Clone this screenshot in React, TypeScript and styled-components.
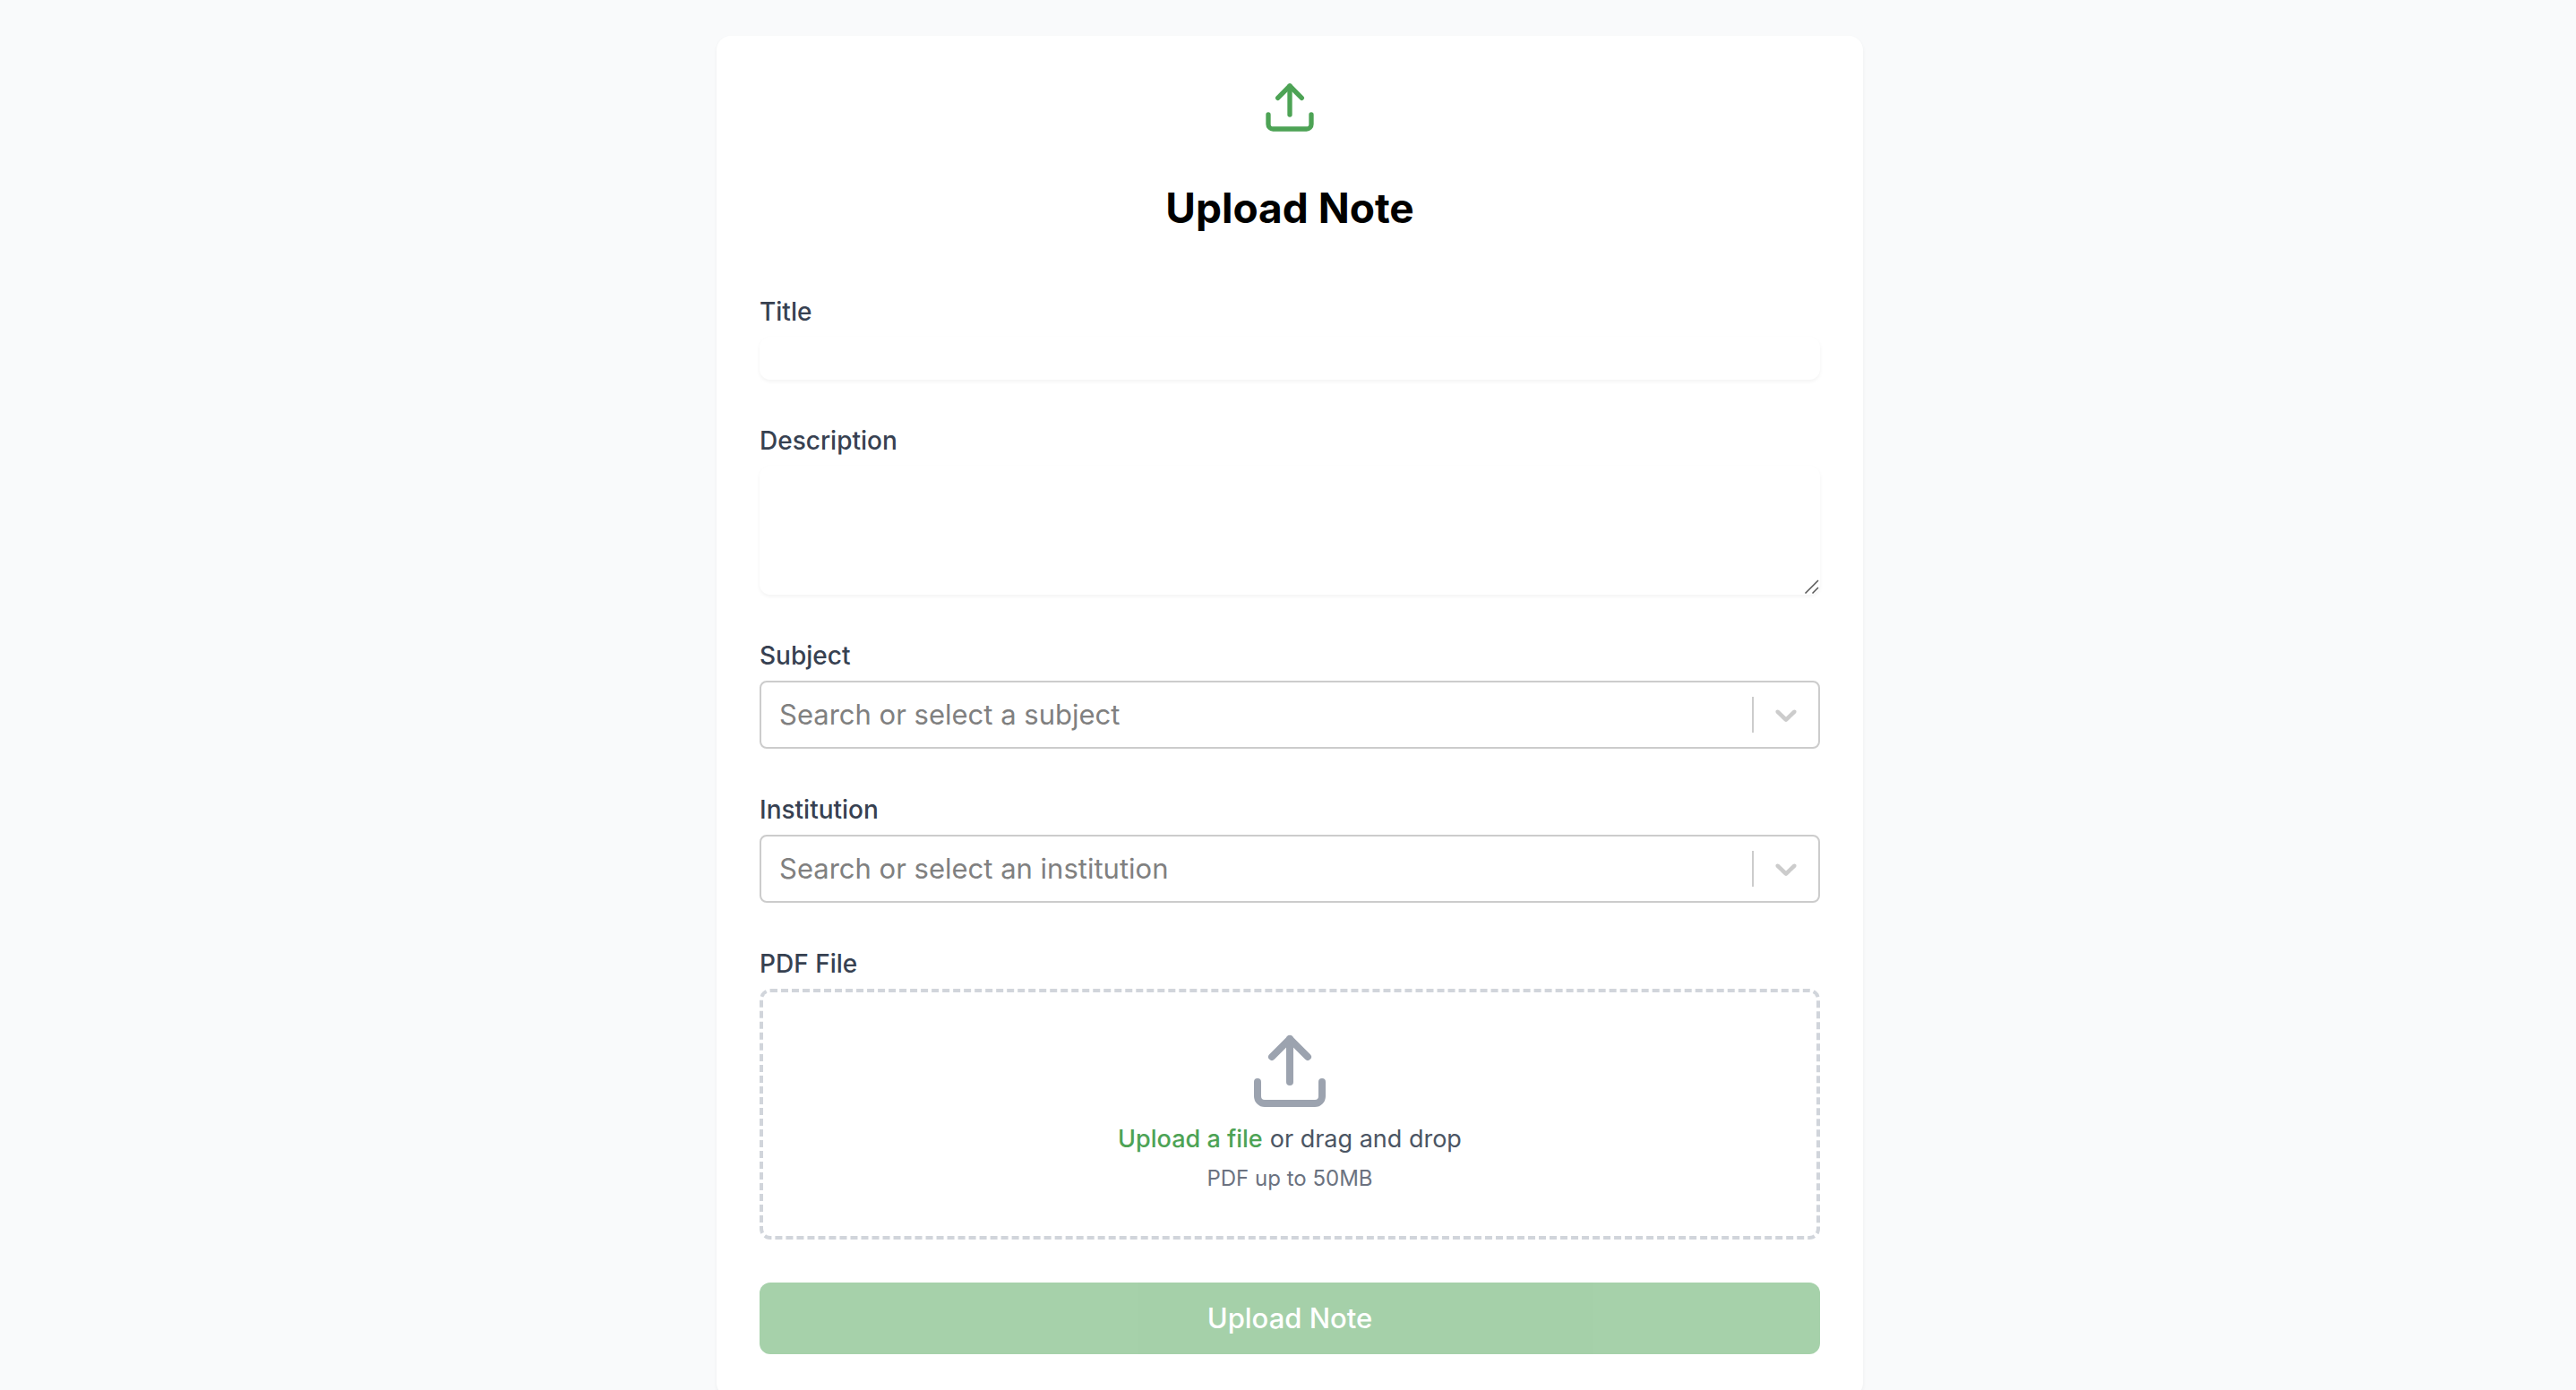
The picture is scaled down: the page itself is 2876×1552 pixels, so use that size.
import React from "react";
import styled, { createGlobalStyle } from "styled-components";
import { Upload } from "lucide-react";

const GREEN = "#4da355";

const GlobalStyle = createGlobalStyle`
  *, *::before, *::after { box-sizing: border-box; }
  body {
    margin: 0;
    background: #f9fafb;
    color: #000;
    font-family: Inter, "Liberation Sans", sans-serif;
    font-size: 31px;
    line-height: 48px;
    -webkit-font-smoothing: antialiased;
  }
`;

const Page = styled.main`
  padding: 40px 40px 40px 44px;
`;

const Card = styled.section`
  max-width: 1280px;
  margin: 0 auto;
  padding: 48px;
  background: #fff;
  border-radius: 16px;
  box-shadow: 0 2px 4px rgba(0, 0, 0, 0.05);
`;

const Header = styled.header`
  display: flex;
  flex-direction: column;
  align-items: center;
  gap: 48px;
  margin-bottom: 64px;
`;

const UploadIcon = styled(Upload)`
  display: block;
  flex: none;
`;

const Heading = styled.h1`
  margin: 0;
  font-size: 46px;
  line-height: 64px;
  font-weight: 700;
`;

const Form = styled.form`
  display: flex;
  flex-direction: column;
  gap: 48px;
`;

const Field = styled.div`
  display: flex;
  flex-direction: column;
  gap: 8px;
`;

const Label = styled.label`
  font-size: 28px;
  line-height: 40px;
  font-weight: 500;
  color: #374151;
`;

const TextInput = styled.input`
  width: 100%;
  height: 48px;
  padding: 0;
  border: 0;
  border-radius: 12px;
  background: #fff;
  font: inherit;
  box-shadow: 0 2px 4px rgba(0, 0, 0, 0.05);
`;

const Stack = styled.div`
  display: grid;
  & > * { grid-area: 1 / 1; }
`;

const TextArea = styled.textarea`
  display: block;
  width: 100%;
  height: 144px;
  padding: 0;
  border: 0;
  border-radius: 12px;
  background: #fff;
  font: inherit;
  resize: vertical;
  box-shadow: 0 2px 4px rgba(0, 0, 0, 0.05);
  &::-webkit-resizer { background: transparent; }
`;

const Grip = styled.svg`
  place-self: end;
  pointer-events: none;
`;

const Select = styled.select`
  appearance: none;
  width: 100%;
  height: 76px;
  padding: 0 92px 0 20px;
  border: 2px solid #ccc;
  border-radius: 8px;
  background: #fff;
  color: #808080;
  font: inherit;
`;

const Indicator = styled.span`
  display: flex;
  align-items: center;
  place-self: center end;
  height: 40px;
  margin-right: 2px;
  padding: 0 16px;
  border-left: 2px solid #ccc;
  color: #ccc;
  pointer-events: none;
`;

const DropZone = styled.div`
  display: flex;
  flex-direction: column;
  align-items: center;
  gap: 8px;
  padding: 40px 48px 48px;
  border: 4px dashed #d1d5db;
  border-radius: 12px;
`;

const DropText = styled.div`
  display: flex;
  gap: 8px;
  font-size: 27px;
  line-height: 40px;
  color: #4b5563;
`;

const FileLabel = styled.label`
  color: ${GREEN};
  font-weight: 500;
  cursor: pointer;
`;

const FileInput = styled.input`
  position: absolute;
  width: 1px;
  height: 1px;
  overflow: hidden;
  clip-path: inset(50%);
`;

const Hint = styled.p`
  margin: 0;
  font-size: 24px;
  line-height: 32px;
  color: #6b7280;
`;

const SubmitButton = styled.button`
  width: 100%;
  padding: 16px 32px;
  border: 0;
  border-radius: 12px;
  background: ${GREEN};
  color: #fff;
  font: inherit;
  font-weight: 500;
  &:disabled { opacity: 0.5; }
`;

function SelectField({ id, label, placeholder }: { id: string; label: string; placeholder: string }) {
  return (
    <Field>
      <Label htmlFor={id}>{label}</Label>
      <Stack>
        <Select id={id} defaultValue="">
          <option value="">{placeholder}</option>
        </Select>
        <Indicator>
          <svg width="40" height="40" viewBox="0 0 20 20" fill="currentColor" aria-hidden="true">
            <path d="M4.516 7.548c0.436-0.446 1.043-0.481 1.576 0l3.908 3.747 3.908-3.747c0.533-0.481 1.141-0.446 1.574 0 0.436 0.445 0.408 1.197 0 1.615-0.406 0.418-4.695 4.502-4.695 4.502-0.217 0.223-0.502 0.335-0.787 0.335s-0.57-0.112-0.789-0.335c0 0-4.287-4.084-4.695-4.502s-0.436-1.17 0-1.615z" />
          </svg>
        </Indicator>
      </Stack>
    </Field>
  );
}

export default function App() {
  return (
    <>
      <GlobalStyle />
      <Page>
        <Card>
          <Header>
            <UploadIcon size={64} color={GREEN} aria-hidden="true" />
            <Heading>Upload Note</Heading>
          </Header>
          <Form>
            <Field>
              <Label htmlFor="title">Title</Label>
              <TextInput id="title" type="text" />
            </Field>
            <Field>
              <Label htmlFor="description">Description</Label>
              <Stack>
                <TextArea id="description" rows={3} />
                <Grip width="20" height="20" viewBox="0 0 20 20" fill="none" stroke="#555" strokeWidth="1.5" aria-hidden="true">
                  <path d="M3.5 18.5 18 4M11.5 18.5 18 12" />
                </Grip>
              </Stack>
            </Field>
            <SelectField id="subject" label="Subject" placeholder="Search or select a subject" />
            <SelectField id="institution" label="Institution" placeholder="Search or select an institution" />
            <Field>
              <Label htmlFor="pdf">PDF File</Label>
              <DropZone>
                <UploadIcon size={96} color="#9ca3af" aria-hidden="true" />
                <DropText>
                  <FileLabel htmlFor="pdf">Upload a file</FileLabel>
                  <FileInput id="pdf" type="file" accept="application/pdf" />
                  <span>or drag and drop</span>
                </DropText>
                <Hint>PDF up to 50MB</Hint>
              </DropZone>
            </Field>
            <SubmitButton type="submit" disabled>Upload Note</SubmitButton>
          </Form>
        </Card>
      </Page>
    </>
  );
}
